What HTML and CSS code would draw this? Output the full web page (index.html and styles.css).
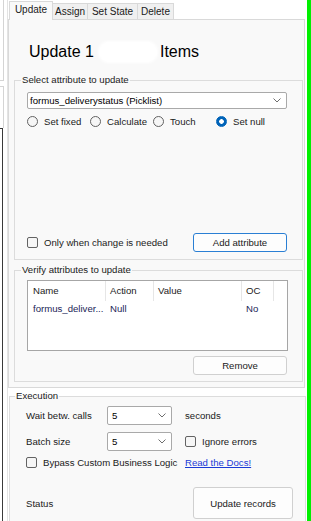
FILE: index.html
```html
<!DOCTYPE html>
<html lang="en">
<head>
  <meta charset="UTF-8" />
  <meta name="viewport" content="width=device-width, initial-scale=1.0" />
  <title>Bulk Data Updater</title>
  <link rel="stylesheet" href="styles.css">
</head>
<body>
  <div class="side">
    <div class="side-top"></div>
    <div class="side-mid"></div>
    <div class="side-low"></div>
  </div>

  <div class="main">
    <div class="tabs">
      <div class="tab active t-update">Update</div>
      <div class="tab t-assign">Assign</div>
      <div class="tab t-state">Set State</div>
      <div class="tab t-delete">Delete</div>
    </div>

    <div class="page">
      <h1>Update 1<span class="blur"></span>Items</h1>

      <fieldset class="grp sel">
        <legend>Select attribute to update</legend>
        <div class="combo wide">
          <span>formus_deliverystatus (Picklist)</span>
          <svg class="chev" width="8" height="5" viewBox="0 0 8 5"><polyline points="0.5,0.5 4,4 7.5,0.5" /></svg>
        </div>
        <div class="radios">
          <label class="radio"><span class="dot"></span>Set fixed</label>
          <label class="radio"><span class="dot"></span>Calculate</label>
          <label class="radio"><span class="dot"></span>Touch</label>
          <label class="radio"><span class="dot on"></span>Set null</label>
        </div>
        <div class="row">
          <label class="check"><span class="box"></span>Only when change is needed</label>
          <button class="btn focus">Add attribute</button>
        </div>
      </fieldset>

      <fieldset class="grp verify">
        <legend>Verify attributes to update</legend>
        <div class="list">
          <div class="lhead"><span>Name</span><span>Action</span><span>Value</span><span>OC</span></div>
          <div class="lrow"><span>formus_deliver...</span><span>Null</span><span></span><span>No</span></div>
        </div>
        <button class="btn remove">Remove</button>
      </fieldset>
    </div>

    <fieldset class="grp exec">
      <legend>Execution</legend>
      <div class="erow first">
        <span class="c1">Wait betw. calls</span>
        <span class="c2">
          <span class="combo small"><span>5</span><svg class="chev" width="8" height="5" viewBox="0 0 8 5"><polyline points="0.5,0.5 4,4 7.5,0.5" /></svg></span>
        </span>
        <span class="c3">seconds</span>
      </div>
      <div class="erow second">
        <span class="c1">Batch size</span>
        <span class="c2">
          <span class="combo small"><span>5</span><svg class="chev" width="8" height="5" viewBox="0 0 8 5"><polyline points="0.5,0.5 4,4 7.5,0.5" /></svg></span>
        </span>
        <label class="c3 check"><span class="box"></span>Ignore errors</label>
      </div>
      <div class="erow short">
        <label class="c12 check"><span class="box"></span>Bypass Custom Business Logic</label>
        <a class="c3 docs" href="#">Read the Docs!</a>
      </div>
      <div class="erow last">
        <span class="c12">Status</span>
        <span class="c3"><button class="btn big">Update records</button></span>
      </div>
    </fieldset>
  </div>

  <div class="edge"></div>
</body>
</html>
```

FILE: styles.css
```css
* {
  box-sizing: border-box;
}
body {
  margin: 0;
  width: 311px;
  height: 521px;
  overflow: hidden;
  display: flex;
  background: #fff;
  font-family: "Liberation Sans", Arial, sans-serif;
  font-size: 9.6px;
  color: #1a1a1a;
}

/* leftover of the neighbouring panel */
.side {
  width: 8px;
  display: flex;
  flex-direction: column;
  border-right: 1px solid #e3e3e3;
}
.side-top {
  width: 4px;
  height: 81px;
  border-right: 1px solid #d4d4d4;
  border-bottom: 1px solid #d4d4d4;
}
.side-mid {
  width: 4px;
  height: 42px;
  margin-top: 5px;
  border-top: 1px solid #d4d4d4;
  border-right: 1px solid #d4d4d4;
}
.side-low {
  flex: 1;
  width: 3px;
  border-top: 1px solid #3a3a3a;
  border-right: 1px solid #3a3a3a;
}

.main {
  width: 299px;
  display: flex;
  flex-direction: column;
}
.edge {
  width: 4px;
  background: #00f000;
}

/* tabs */
.tabs {
  flex: none;
  height: 19px;
  display: flex;
  align-items: flex-end;
  padding-left: 1px;
}
.tab {
  height: 16px;
  line-height: 15px;
  margin-right: -1px;
  border: 1px solid #d9d9d9;
  border-bottom: none;
  background: #f0f0f0;
  text-align: center;
  font-size: 10px;
}
.tab.active {
  position: relative;
  z-index: 1;
  height: 19px;
  line-height: 16px;
  margin-bottom: -1px;
  background: #f9f9f9;
}
.t-update { width: 44px; }
.t-assign { width: 36px; }
.t-state { width: 51px; }
.t-delete { width: 37px; }

.page {
  flex: none;
  width: 297px;
  height: 369px;
  padding-left: 5px;
  border: 1px solid #d9d9d9;
  background: #f9f9f9;
}
h1 {
  margin: 21px 0 0 15px;
  height: 22px;
  font-size: 16px;
  line-height: 22px;
  font-weight: normal;
  color: #000;
}
.blur {
  display: inline-block;
  width: 58px;
  height: 20px;
  margin: 0 3px 0 5px;
  vertical-align: -5px;
  border-radius: 10px;
  background: #fff;
  box-shadow: 0 0 3px 1px #fff;
}

/* group boxes */
.grp {
  margin: 0;
  padding: 0;
  min-width: 0;
  border: 1px solid #dcdcdc;
}
.grp legend {
  margin-left: 6px;
  padding: 0 1px;
  line-height: 12px;
}
.grp.sel {
  width: 289px;
  margin-top: 11px;
}
.grp.verify {
  width: 289px;
  margin-top: 4px;
}
.grp.exec {
  flex: none;
  width: 297px;
  height: 150px;
  margin: 2px 0 0 1px;
  background: #f9f9f9;
}
.exec legend {
  margin-left: 5px;
}

/* inputs */
.combo {
  display: flex;
  align-items: center;
  justify-content: space-between;
  height: 17px;
  padding: 0 5px 0 2px;
  border: 1px solid #a9a9a9;
  border-radius: 2px;
  background: #fff;
  color: #000;
}
.combo.wide {
  width: 260px;
  margin: 6px 0 0 12px;
}
.combo.small {
  width: 65px;
  height: 19px;
  padding-left: 4px;
}
.chev polyline {
  fill: none;
  stroke: #6e6e6e;
  stroke-width: 1;
}

.radios {
  display: grid;
  grid-template-columns: repeat(4, 63px);
  margin: 6px 0 0 12px;
}
.radio,
.check {
  display: flex;
  align-items: center;
  gap: 6px;
  height: 12px;
}
.dot {
  width: 11px;
  height: 11px;
  border: 1px solid #626262;
  border-radius: 50%;
  background: #f6f6f6;
}
.dot.on {
  border-color: #0063b8;
  background: radial-gradient(circle, #fff 0 2px, #0063b8 2.6px);
}
.box {
  width: 11px;
  height: 11px;
  border: 1px solid #636363;
  border-radius: 2px;
  background: #f6f6f6;
}

.row {
  display: flex;
  align-items: center;
  justify-content: space-between;
  height: 19px;
  margin: 106px 15px 7px 12px;
}
.btn {
  display: block;
  width: 94px;
  height: 19px;
  padding: 0;
  border: 1px solid #d0d0d0;
  border-radius: 3px;
  background: #fdfdfd;
  font: inherit;
  color: #1a1a1a;
}
.btn.focus {
  border-color: #2a7fd4;
}
.btn.remove {
  margin: 5px 0 6px 178px;
}
.btn.big {
  width: 100px;
  height: 32px;
  margin-left: 8px;
}

/* list view */
.list {
  width: 261px;
  height: 71px;
  margin: 4px 0 0 12px;
  border: 1px solid #a6a6a6;
  background: #fff;
}
.lhead,
.lrow {
  display: grid;
  grid-template-columns: 78px 48px 88px 32px;
}
.lhead span {
  height: 20px;
  line-height: 20px;
  padding-left: 4px;
  border-right: 1px solid #e6e6e6;
  color: #1a1a1a;
}
.lrow span {
  height: 15px;
  line-height: 15px;
  padding-left: 4px;
  color: #1b2557;
  white-space: nowrap;
}
.lhead span:first-child,
.lrow span:first-child {
  padding-left: 5px;
}

/* execution rows */
.exec .erow {
  display: flex;
  align-items: center;
  height: 19px;
  margin: 4px 0 0 16px;
}
.exec .erow.second {
  margin-top: 7px;
}
.exec .erow.short {
  height: 12px;
  margin-top: 5px;
}
.exec .erow.last {
  height: 32px;
  margin-top: 19px;
}
.c1 { width: 81px; }
.c2 { width: 78px; }
.c12 { width: 159px; }
.docs {
  color: #1a3ad6;
  text-decoration: underline;
}
```
